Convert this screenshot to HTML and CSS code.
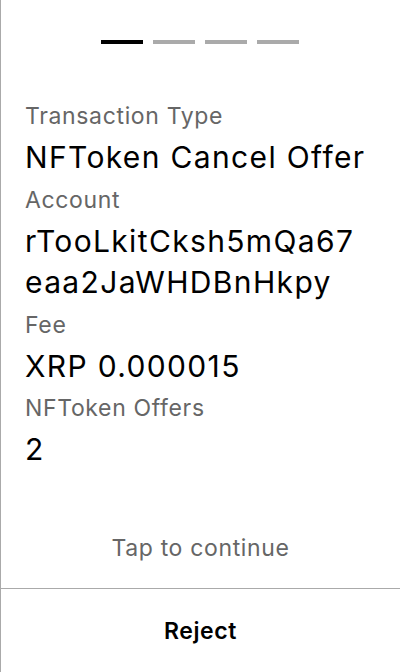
FILE: index.html
```html
<!DOCTYPE html>
<html>
<head>
<meta charset="utf-8">
<link rel="stylesheet" href="styles.css">
</head>
<body>
<div class="screen">
  <div class="steps">
    <span class="step active"></span>
    <span class="step"></span>
    <span class="step"></span>
    <span class="step"></span>
  </div>
  <div class="details">
    <div class="label">Transaction Type</div>
    <div class="value">NFToken Cancel Offer</div>
    <div class="label">Account</div>
    <div class="value">rTooLkitCksh5mQa67<br>eaa2JaWHDBnHkpy</div>
    <div class="label">Fee</div>
    <div class="value">XRP 0.000015</div>
    <div class="label">NFToken Offers</div>
    <div class="value">2</div>
  </div>
  <div class="spacer"></div>
  <div class="tap">Tap to continue</div>
  <div class="reject">Reject</div>
</div>
</body>
</html>
```
FILE: styles.css
```css
html, body {
  margin: 0;
  padding: 0;
  background: #fff;
}
.screen {
  box-sizing: border-box;
  width: 400px;
  height: 672px;
  border-left: 1px solid #aaa;
  display: flex;
  flex-direction: column;
  font-family: Inter, "Noto Sans", sans-serif;
  color: #000;
}
.steps {
  display: flex;
  justify-content: center;
  gap: 10px;
  padding-top: 40px;
  padding-right: 1px;
}
.step {
  width: 42px;
  height: 4px;
  background: #aaa;
}
.step.active {
  background: #000;
}
.details {
  padding: 51px 24px 0 24px;
}
.label {
  font-size: 23px;
  letter-spacing: 0.65px;
  line-height: 42px;
  color: #666;
}
.value {
  font-size: 30px;
  letter-spacing: 1.35px;
  line-height: 41.5px;
  color: #000;
}
.spacer {
  flex: 1;
}
.tap {
  height: 84px;
  display: flex;
  align-items: center;
  justify-content: center;
  font-size: 23px;
  letter-spacing: 0.65px;
  color: #666;
  box-sizing: border-box;
  padding-top: 4px;
}
.reject {
  height: 84px;
  border-top: 1px solid #aaa;
  box-sizing: border-box;
  display: flex;
  align-items: center;
  justify-content: center;
  font-size: 23px;
  letter-spacing: 0.6px;
  font-weight: 600;
  color: #000;
}
```
